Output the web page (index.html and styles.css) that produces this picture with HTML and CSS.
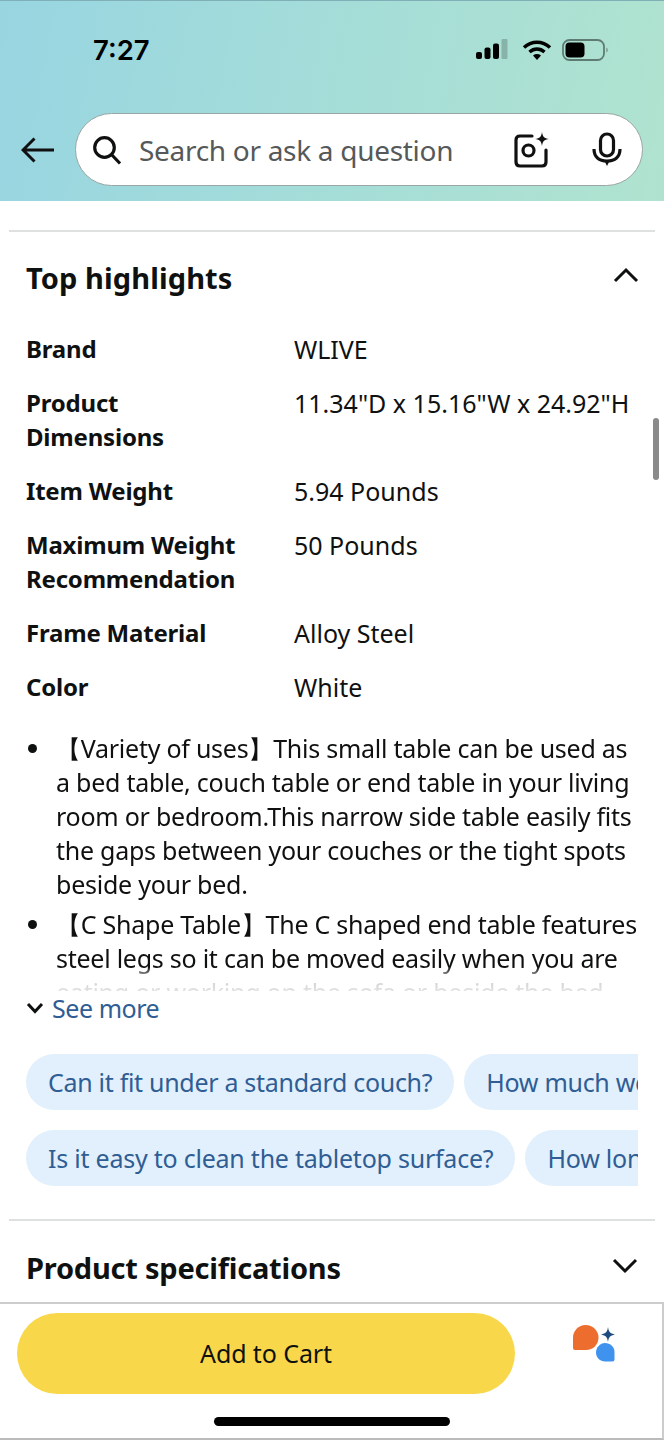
FILE: index.html
```html
<!DOCTYPE html>
<html lang="en">
<head>
<meta charset="utf-8">
<title>Top highlights</title>
<link rel="stylesheet" href="styles.css">
</head>
<body>
<div class="page">
  <header class="top">
    <div class="status">
      <span class="time">7:27</span>
      <div class="status-icons">
        <svg class="signal" width="34" height="22" viewBox="0 0 34 22"><rect x="1" y="13" width="6" height="7" rx="2" fill="#000"/><rect x="9.500" y="8.500" width="6" height="11.500" rx="2" fill="#000"/><rect x="18" y="4.500" width="6" height="15.500" rx="2" fill="#000"/><rect x="26.500" y="0" width="6" height="20" rx="1" fill="#000" opacity=".2"/></svg>
        <svg class="wifi" width="30" height="22" viewBox="0 0 30 22"><path d="M2 8.500C9.500 1.500 20.500 1.500 28 8.500" fill="none" stroke="#000" stroke-width="3.400"/><path d="M7.500 13C12 9 18 9 22.500 13" fill="none" stroke="#000" stroke-width="3.400"/><path d="M11 16.500C13.500 14.600 16.500 14.600 19 16.500L15 21Z" fill="#000"/></svg>
        <svg class="battery" width="46" height="24" viewBox="0 0 46 24"><rect x="1" y="2" width="41" height="20" rx="6.500" fill="none" stroke="#000" stroke-opacity=".45" stroke-width="1.800"/><rect x="3.500" y="4.500" width="19" height="15" rx="4" fill="#000"/><path d="M44.500 9.500C46 10.500 46 13.500 44.500 14.500Z" fill="#000" opacity=".45"/></svg>
      </div>
    </div>
    <div class="search-row">
      <svg class="back" width="34" height="26" viewBox="0 0 34 26"><path d="M33 13H2M13.500 1.500L2 13L13.500 24.500" fill="none" stroke="#111" stroke-width="3"/></svg>
      <div class="search">
        <svg class="mag" width="30" height="30" viewBox="0 0 30 30"><circle cx="12.500" cy="12.500" r="9.800" fill="none" stroke="#0f1111" stroke-width="3.200"/><path d="M19.500 19.500L28 28.500" stroke="#0f1111" stroke-width="3.200"/></svg>
        <span class="placeholder">Search or ask a question</span>
        <svg class="lens" width="36" height="36" viewBox="0 0 36 36"><path d="M18 4H6Q2 4 2 8V30Q2 34 6 34H28Q32 34 32 30V18" fill="none" stroke="#111" stroke-width="3.200" stroke-linecap="round"/><circle cx="14.500" cy="18.500" r="5.500" fill="none" stroke="#111" stroke-width="3.200"/><path d="M28 0C28.800 5 30 6.200 35 7C30 7.800 28.800 9 28 14C27.200 9 26 7.800 21 7C26 6.200 27.200 5 28 0Z" fill="#111"/></svg>
        <svg class="mic" width="30" height="36" viewBox="0 0 30 36"><rect x="8.500" y="2" width="13" height="22" rx="6.500" fill="none" stroke="#111" stroke-width="3.200"/><path d="M2 17C2 25 7 29 15 29C23 29 28 25 28 17" fill="none" stroke="#111" stroke-width="3.200"/><path d="M12.500 29H17.500L15 34Z" fill="#111"/></svg>
      </div>
    </div>
  </header>

  <main class="content">
    <hr class="rule">
    <section class="section">
      <div class="section-head head-one">
        <h2>Top highlights</h2>
        <svg class="chev" width="26" height="16" viewBox="0 0 26 16"><path d="M2 14L13 3L24 14" fill="none" stroke="#0f1111" stroke-width="3"/></svg>
      </div>
      <dl class="specs">
        <dt>Brand</dt><dd>WLIVE</dd>
        <dt>Product Dimensions</dt><dd>11.34"D x 15.16"W x 24.92"H</dd>
        <dt>Item Weight</dt><dd>5.94 Pounds</dd>
        <dt>Maximum Weight Recommendation</dt><dd>50 Pounds</dd>
        <dt>Frame Material</dt><dd>Alloy Steel</dd>
        <dt>Color</dt><dd>White</dd>
      </dl>
      <div class="bullets-wrap">
        <ul class="bullets">
          <li><span>【Variety of uses】This small table can be used as a bed table, couch table or end table in your living room or bedroom.This narrow side table easily fits the gaps between your couches or the tight spots beside your bed.</span></li>
          <li><span>【C Shape Table】The C shaped end table features steel legs so it can be moved easily when you are eating or working on the sofa or beside the bed.</span></li>
        </ul>
      </div>
      <div class="see-more">
        <svg width="18" height="12" viewBox="0 0 18 12"><path d="M2 2L9 9.500L16 2" fill="none" stroke="#0f1111" stroke-width="3"/></svg>
        <span>See more</span>
      </div>
      <div class="chips">
        <div class="chip-row">
          <span class="chip">Can it fit under a standard couch?</span>
          <span class="chip">How much weight can it hold?</span>
        </div>
        <div class="chip-row">
          <span class="chip">Is it easy to clean the tabletop surface?</span>
          <span class="chip">How long does it take to assemble?</span>
        </div>
      </div>
    </section>
    <hr class="rule rule-two">
    <section class="section">
      <div class="section-head head-two">
        <h2>Product specifications</h2>
        <svg class="chev" width="26" height="16" viewBox="0 0 26 16"><path d="M2 2L13 13L24 2" fill="none" stroke="#0f1111" stroke-width="3"/></svg>
      </div>
    </section>
    <div class="scrollbar"></div>
  </main>

  <footer class="bar">
    <div class="bar-row">
      <button class="cart">Add to Cart</button>
      <svg class="assistant" width="46" height="40" viewBox="0 0 46 40"><path d="M13.500 1C21 1 26.500 7 26.500 13.500C26.500 20.500 21 26 14 26H3Q1 26 1 24V13.500C1 7 6.500 1 13.500 1Z" fill="#ec6d2e"/><path d="M33 19C38.500 19 42.500 23 42.500 28V35.500Q42.500 37.500 40.500 37.500H33C28 37.500 24 33.500 24 28.500C24 23.500 28 19 33 19Z" fill="#3f93ef"/><path d="M36 3C36.800 8 38 9.500 43 10.500C38 11.500 36.800 13 36 18C35.200 13 34 11.500 29 10.500C34 9.500 35.200 8 36 3Z" fill="#1f4b7f"/></svg>
    </div>
    <div class="home-indicator"></div>
  </footer>
</div>
</body>
</html>
```

FILE: styles.css
```css
* { box-sizing: border-box; }
html, body { margin: 0; padding: 0; }
body {
  width: 664px;
  height: 1440px;
  overflow: hidden;
  background: #fff;
  color: #0f1111;
  font-family: "Noto Sans", "Open Sans", sans-serif;
}
.page { display: flex; flex-direction: column; height: 1440px; }

.top {
  height: 201px;
  flex: none;
  background: linear-gradient(100deg, #98d5e1 0%, #a3dcd9 45%, #b0e3cf 100%);
  border-top: 1px solid #7fb0b8;
  padding-top: 30px;
}
.status { display: flex; align-items: center; justify-content: space-between; height: 38px; padding: 0 56px 0 93px; }
.time { font-family: "Inter", sans-serif; font-size: 27.500px; font-weight: 600; color: #000; }
.status-icons { display: flex; align-items: center; gap: 10px; }
.signal { margin-right: 3px; }
.search-row { display: flex; align-items: center; margin-top: 44px; padding-left: 21px; }
.back { flex: none; margin-right: 20px; }
.search {
  width: 568px;
  height: 73px;
  flex: none;
  display: flex;
  align-items: center;
  background: #fff;
  border: 1.500px solid #9aa5a5;
  border-radius: 37px;
  padding-left: 16px;
}
.mag { flex: none; margin-right: 17px; }
.placeholder { font-size: 28px; letter-spacing: -0.3px; color: #565959; width: 375px; flex: none; white-space: nowrap; }
.lens { flex: none; }
.mic { flex: none; margin-left: 42px; }

.content { flex: 1; min-height: 0; overflow: hidden; position: relative; padding: 29px 9px 0; }
.rule { border: 0; height: 2px; background: #dfe1e1; margin: 0; }
.rule-two { margin-top: 33px; }
.section { padding: 0 17px; }
.section-head { display: flex; align-items: center; justify-content: space-between; height: 46px; margin-top: 23px; }
.section-head h2 { margin: 0; font-size: 29px; font-weight: 700; line-height: 46px; }
.chev { flex: none; }
.head-one h2 { letter-spacing: 0.1px; }
.head-one .chev { margin: 0 -1px 6px 0; }
.head-two { margin-top: 24px; }
.head-two h2 { letter-spacing: -0.22px; }
.head-two .chev { margin-bottom: 4px; }

.specs {
  display: grid;
  grid-template-columns: 268px 1fr;
  row-gap: 20px;
  margin: 31px 0 0;
  font-size: 25px;
  line-height: 34px;
}
.specs dt { font-size: 24px; font-weight: 700; letter-spacing: -0.2px; padding-right: 40px; }
.specs dd { margin: 0; white-space: nowrap; }

.bullets-wrap {
  height: 260px;
  margin-top: 27px;
  overflow: hidden;
  -webkit-mask-image: linear-gradient(#000 236px, rgba(0,0,0,.2) 248px, rgba(0,0,0,.12) 100%);
  mask-image: linear-gradient(#000 236px, rgba(0,0,0,.2) 248px, rgba(0,0,0,.12) 100%);
}
.bullets { list-style: none; margin: 0; padding: 0; font-size: 25px; line-height: 34px; letter-spacing: -0.25px; }
.bullets li { margin: 0; display: flex; }
.bullets li::before { content: ""; flex: none; width: 9px; height: 9px; border-radius: 50%; background: #0f1111; margin: 13px 19px 0 2px; }
.bullets li + li { margin-top: 6px; }

.see-more { display: flex; align-items: center; gap: 8px; height: 34px; color: #2f5d94; font-size: 25px; letter-spacing: -0.45px; }

.chips { margin-top: 29px; display: flex; flex-direction: column; gap: 20px; overflow: hidden; width: 612px; }
.chip-row { display: flex; gap: 10px; }
.chip { flex: none; height: 56px; line-height: 56px; padding: 0 22px; border-radius: 28px; background: #e1f0fc; color: #2f5d94; font-size: 25px; letter-spacing: -0.3px; white-space: nowrap; }
.chip-row + .chip-row .chip { letter-spacing: -0.23px; }

.scrollbar { position: absolute; left: 653px; top: 217px; width: 6px; height: 62px; border-radius: 3px; background: #8a8a8a; }

.bar { height: 138px; flex: none; border-top: 2px solid #ccc; border-right: 2px solid #ccc; border-bottom: 2px solid #bbb; background: #fff; padding-top: 9px; position: relative; }
.bar-row { display: flex; align-items: flex-start; padding-left: 17px; }
.cart { width: 498px; height: 81px; border: 0; border-radius: 41px; background: #f8d84a; color: #0f1111; font-family: inherit; font-size: 25px; letter-spacing: -0.1px; padding: 0 0 2px; }
.assistant { flex: none; margin: 11px 0 0 57px; }
.home-indicator { width: 236px; height: 9px; border-radius: 5px; background: #000; margin: 23px 0 0 214px; }
```
